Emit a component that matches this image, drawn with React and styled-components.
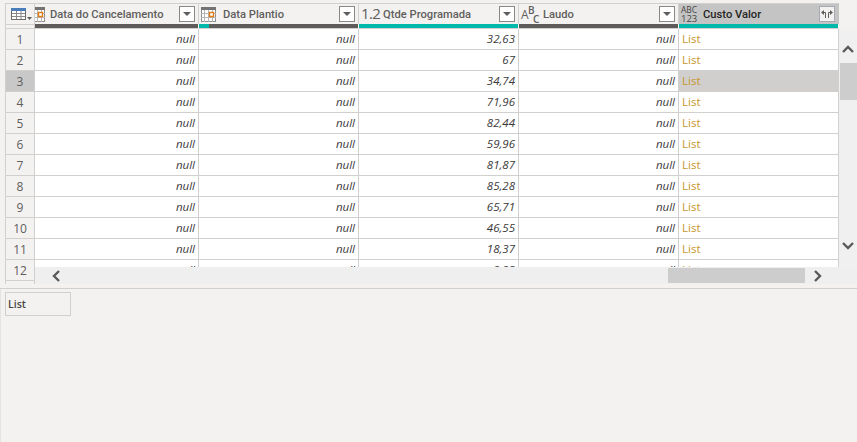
import React from "react";
import styled, { createGlobalStyle } from "styled-components";

const GlobalStyle = createGlobalStyle`
  html, body {
    margin: 0;
    padding: 0;
    background: #f3f2f1;
  }
  body {
    font-family: "Open Sans", "Liberation Sans", sans-serif;
  }
`;

const LINE = "#d2d0ce";

const Page = styled.div`
  width: 857px;
  height: 442px;
  display: flex;
  flex-direction: column;
  overflow: hidden;
  background: #f3f2f1;
`;

const GridArea = styled.div`
  height: 289px;
  padding: 3px 0 4px 5px;
  box-sizing: border-box;
  display: flex;
  border-bottom: 1px solid ${LINE};
`;

const RowHeaders = styled.div`
  width: 30px;
  flex: none;
  box-sizing: border-box;
  border: 1px solid ${LINE};
  border-bottom: none;
  overflow: hidden;
`;

const Corner = styled.div`
  height: 20px;
  border-bottom: 1px solid ${LINE};
  position: relative;
  display: flex;
  align-items: flex-start;
  padding: 4px 0 0 5px;
`;

const CornerRule = styled.div`
  height: 1px;
  background: ${LINE};
  position: absolute;
  left: 0;
  right: 0;
  top: 20px;
`;

const RowNumber = styled.div`
  height: 20px;
  border-bottom: 1px solid ${LINE};
  display: flex;
  align-items: center;
  justify-content: center;
  font-size: 12px;
  color: #605e5c;
  background: ${(p) => (p.$selected ? "#c8c8c8" : "transparent")};
`;

const DataSide = styled.div`
  flex: 1;
  min-width: 0;
  display: flex;
  flex-direction: column;
`;

const TopSide = styled.div`
  display: flex;
  height: 264px;
`;

const Table = styled.div`
  width: 804px;
  flex: none;
  overflow: hidden;
  background: #fff;
`;

const Columns = styled.div`
  display: grid;
  grid-template-columns: 164px repeat(4, 160px);
`;

const HeaderCell = styled.div`
  height: 20px;
  display: flex;
  align-items: center;
  border-top: 1px solid ${LINE};
  border-right: 1px solid ${(p) => (p.$active ? "#c4c4c4" : LINE)};
  background: ${(p) => (p.$active ? "#c4c4c4" : "#f3f2f1")};
`;

const IconSlot = styled.div`
  width: ${(p) => p.$width}px;
  flex: none;
  display: flex;
  padding-left: ${(p) => (p.$clip ? 0 : 2)}px;
  box-sizing: border-box;
  overflow: ${(p) => (p.$clip ? "hidden" : "visible")};
  svg {
    margin-left: ${(p) => (p.$clip ? -5 : 0)}px;
  }
`;

const ColumnName = styled.span`
  font-family: Roboto, "Open Sans", sans-serif;
  font-size: 11.2px;
  font-weight: 500;
  white-space: nowrap;
  color: ${(p) => (p.$active ? "#252423" : "#605e5c")};
`;

const MenuButton = styled.div`
  width: 14px;
  height: 14px;
  margin-left: auto;
  margin-right: 3px;
  flex: none;
  background: ${(p) => (p.$active ? "#f3f2f1" : "#fff")};
  border: 1px solid ${(p) => (p.$active ? "#a6aab4" : "#8a8886")};
  display: flex;
  align-items: center;
  justify-content: center;
`;

const Quality = styled.div`
  height: 4px;
  border-right: 1px solid #fff;
  border-bottom: 1px solid ${LINE};
  background: ${(p) =>
    p.$split
      ? "linear-gradient(to right, #01b8aa 10px, #5f5b5a 10px)"
      : p.$teal
      ? "#01b8aa"
      : "#5f5b5a"};
`;

const Cell = styled.div`
  height: 19px;
  border-right: 1px solid ${LINE};
  border-bottom: 1px solid ${LINE};
  display: flex;
  align-items: center;
  justify-content: ${(p) => (p.$link ? "flex-start" : "flex-end")};
  padding: 0 3px 1px;
  font-size: 11.5px;
  font-style: ${(p) => (p.$link ? "normal" : "italic")};
  color: ${(p) => (p.$link ? "#c9962c" : "#3b3a39")};
  background: ${(p) => (p.$selected ? "#d0cfcd" : "#fff")};
`;

const VerticalBar = styled.div`
  flex: 1;
  margin-top: 26px;
  background: #f0f0f0;
  display: flex;
  flex-direction: column;
  align-items: center;
  padding-top: 15px;
`;

const VerticalThumb = styled.div`
  width: 17px;
  height: 37px;
  margin-top: 7px;
  background: #cdcdcd;
`;

const DownArrow = styled.div`
  margin-top: auto;
  margin-bottom: 16px;
  line-height: 0;
`;

const HorizontalBar = styled.div`
  height: 17px;
  background: #efefef;
  display: flex;
  align-items: center;
  padding-left: 16px;
`;

const HorizontalThumb = styled.div`
  width: 137px;
  height: 15px;
  margin-left: 605px;
  background: #cdcdcd;
`;

const ArrowRight = styled.div`
  margin-left: 6px;
  line-height: 0;
`;

const BottomPane = styled.div`
  flex: 1;
  padding: 3px 5px;
  border-left: 1px solid #e6e4e2;
`;

const ValueBox = styled.div`
  width: 58px;
  height: 22px;
  margin-left: -1px;
  padding: 0 4px 0 2px;
  border: 1px solid ${LINE};
  display: flex;
  align-items: center;
  font-size: 10.5px;
  font-weight: 600;
  color: #484644;
`;

const Chevron = ({ points }) => (
  <svg width="12" height="12" viewBox="0 0 12 12">
    <polyline points={points} fill="none" stroke="#5a5a5a" strokeWidth="2.4" />
  </svg>
);

const TableIcon = () => (
  <svg width="21" height="13" viewBox="0 0 21 13" style={{ display: "block" }}>
    <rect x="0.5" y="0.5" width="14" height="11" fill="#fff" stroke="#6d6d6d" />
    <rect x="0" y="0" width="15" height="3" fill="#4a7ebb" />
    <path d="M5.5 3v8M10 3v8M1 5.5h13M1 8.5h13" stroke="#8a8a8a" />
    <path d="M16 9h5l-2.5 3z" fill="#605e5c" />
  </svg>
);

const DateIcon = () => (
  <svg width="15" height="15" viewBox="0 0 15 15" style={{ display: "block", flex: "none" }}>
    <rect x="0.5" y="0.5" width="14" height="14" fill="#fff" stroke="#8f8f8f" />
    <rect x="0" y="0" width="15" height="3" fill="#737373" />
    <path d="M3.5 3v12M7.5 3v12M11.5 3v12M0 6.5h15M0 10.5h15" stroke="#b5b5b5" />
    <rect x="8.5" y="5.5" width="4" height="4" fill="#fff" stroke="#e07b1a" strokeWidth="1.4" />
  </svg>
);

const DecimalIcon = () => (
  <svg width="20" height="16" viewBox="0 0 20 16" style={{ display: "block", overflow: "visible" }}>
    <text x="0" y="13" fontSize="15" letterSpacing="-0.6" fontFamily="Open Sans" fill="#605e5c">1.2</text>
  </svg>
);

const TextIcon = () => (
  <svg width="20" height="19" viewBox="0 0 20 19" style={{ display: "block", overflow: "visible" }}>
    <text x="0" y="14" fontSize="12" fontFamily="Open Sans" fill="#605e5c">A</text>
    <text x="7" y="9" fontSize="10" fontWeight="600" fontFamily="Open Sans" fill="#605e5c">B</text>
    <text x="12" y="18" fontSize="10" fontWeight="600" fontFamily="Open Sans" fill="#605e5c">C</text>
  </svg>
);

const AnyIcon = () => (
  <svg width="18" height="18" viewBox="0 0 18 18" style={{ display: "block", overflow: "visible" }}>
    <text x="0" y="8" fontSize="8.5" fontFamily="Open Sans" fill="#484644">ABC</text>
    <text x="0" y="17" fontSize="9.5" fontFamily="Open Sans" fill="#484644">123</text>
  </svg>
);

const FilterArrow = () => (
  <svg width="8" height="4" viewBox="0 0 8 4">
    <path d="M0 0h8L4 4z" fill="#605e5c" />
  </svg>
);

const ExpandArrows = () => (
  <svg width="12" height="10" viewBox="0 0 12 10">
    <path d="M0 3.5L3 1v5zM12 3.5L9 1v5z" fill="#605e5c" />
    <path d="M3 3.5h1.5V9M9 3.5H7.5V9" fill="none" stroke="#605e5c" />
  </svg>
);

const columns = [
  { name: "Data do Cancelamento", icon: <DateIcon />, slot: 15, clip: true, bar: "dark" },
  { name: "Data Plantio", icon: <DateIcon />, slot: 24, bar: "split" },
  { name: "Qtde Programada", icon: <DecimalIcon />, slot: 24, bar: "teal" },
  { name: "Laudo", icon: <TextIcon />, slot: 24, bar: "dark" },
  { name: "Custo Valor", icon: <AnyIcon />, slot: 24, bar: "teal", active: true },
];

const values = ["32,63", "67", "34,74", "71,96", "82,44", "59,96", "81,87", "85,28", "65,71", "46,55", "18,37", "9,93"];

export default function App() {
  return (
    <Page>
      <GlobalStyle />
      <GridArea>
        <RowHeaders>
          <Corner>
            <TableIcon />
            <CornerRule />
          </Corner>
          {values.map((_, i) => (
            <RowNumber key={i} $selected={i === 2}>{i + 1}</RowNumber>
          ))}
          <RowNumber />
        </RowHeaders>
        <DataSide>
          <TopSide>
            <Table>
              <Columns>
                {columns.map((c) => (
                  <HeaderCell key={c.name} $active={c.active}>
                    <IconSlot $width={c.slot} $clip={c.clip}>{c.icon}</IconSlot>
                    <ColumnName $active={c.active}>{c.name}</ColumnName>
                    <MenuButton $active={c.active}>
                      {c.active ? <ExpandArrows /> : <FilterArrow />}
                    </MenuButton>
                  </HeaderCell>
                ))}
                {columns.map((c) => (
                  <Quality key={c.name} $teal={c.bar === "teal"} $split={c.bar === "split"} />
                ))}
                {values.map((v, i) => (
                  <React.Fragment key={i}>
                    <Cell>null</Cell>
                    <Cell>null</Cell>
                    <Cell>{v}</Cell>
                    <Cell>null</Cell>
                    <Cell $link $selected={i === 2}>List</Cell>
                  </React.Fragment>
                ))}
              </Columns>
            </Table>
            <VerticalBar>
              <Chevron points="1,8 6,3 11,8" />
              <VerticalThumb />
              <DownArrow>
                <Chevron points="1,4 6,9 11,4" />
              </DownArrow>
            </VerticalBar>
          </TopSide>
          <HorizontalBar>
            <Chevron points="8,1 3,6 8,11" />
            <HorizontalThumb />
            <ArrowRight>
              <Chevron points="4,1 9,6 4,11" />
            </ArrowRight>
          </HorizontalBar>
        </DataSide>
      </GridArea>
      <BottomPane>
        <ValueBox>List</ValueBox>
      </BottomPane>
    </Page>
  );
}
